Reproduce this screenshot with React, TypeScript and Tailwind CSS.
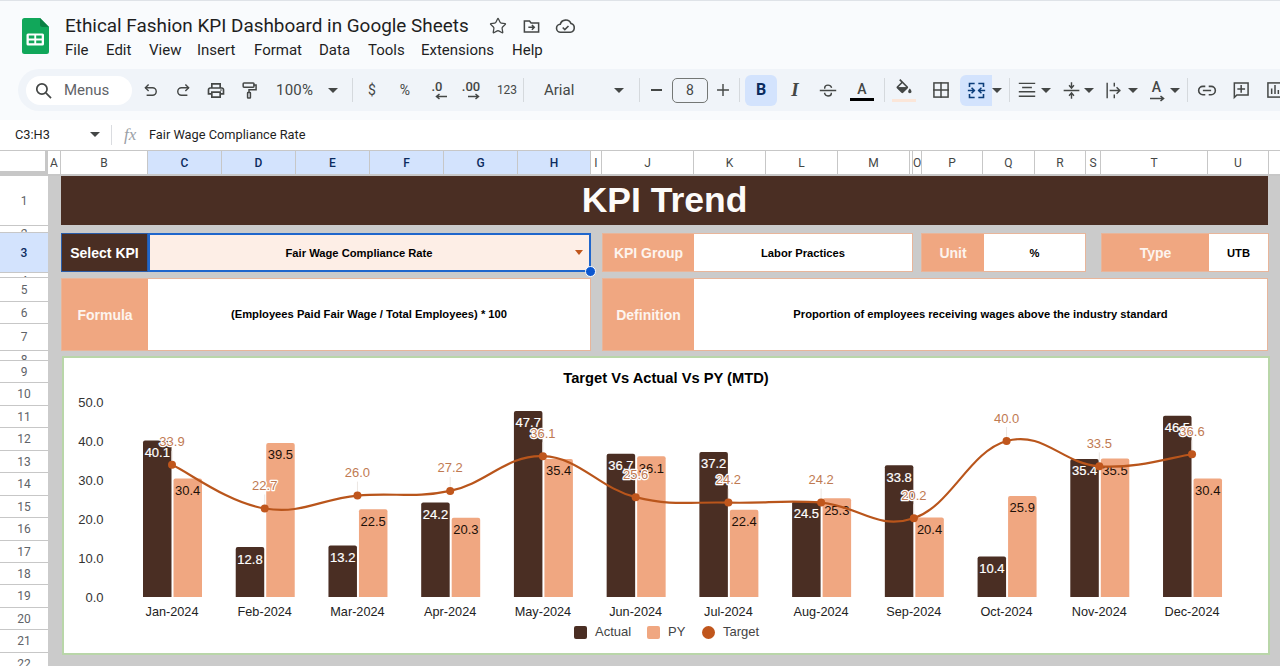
import React from "react";
import { Star } from "lucide-react";

const ic = "#444746";

function Svg({ children, size = 20, color = ic, sw = 1.8 }: { children: React.ReactNode; size?: number; color?: string; sw?: number }) {
  return (
    <svg width={size} height={size} viewBox="0 0 24 24" fill="none" stroke={color} strokeWidth={sw} strokeLinecap="square" strokeLinejoin="miter">
      {children}
    </svg>
  );
}

function Caret({ className = "" }: { className?: string }) {
  return (
    <div className={`flex w-[10px] shrink-0 items-center justify-center ${className}`}>
      <div className="h-0 w-0 border-x-[5px] border-t-[5px] border-x-transparent border-t-[#444746]" />
    </div>
  );
}

function Sep({ className = "" }: { className?: string }) {
  return <div className={`h-[24px] w-px shrink-0 bg-[#d5d9dd] ${className}`} />;
}

function Slot({ className = "", children }: { className?: string; children: React.ReactNode }) {
  return <div className={`flex h-[31px] w-[20px] shrink-0 items-center justify-center ${className}`}>{children}</div>;
}

function SheetsLogo() {
  return (
    <svg width="27" height="36" viewBox="0 0 27 36" className="shrink-0">
      <path d="M2.5 0H18l9 9v24.5a2.5 2.5 0 0 1-2.5 2.5h-22A2.5 2.5 0 0 1 0 33.5v-31A2.5 2.5 0 0 1 2.5 0z" fill="#11a75a" />
      <path d="M18 0l9 9h-6.5A2.5 2.5 0 0 1 18 6.5z" fill="#0b8043" />
      <rect x="4.5" y="15.5" width="17.5" height="12" rx="1.5" fill="#fff" />
      <path d="M6.8 17.6h5.5v2.9H6.8zM14.2 17.6h5.5v2.9h-5.5zM6.8 22.4h5.5v2.9H6.8zM14.2 22.4h5.5v2.9h-5.5z" fill="#11a75a" />
    </svg>
  );
}

function Toolbar() {
  return (
    <div className="ml-[18px] flex h-[42px] items-center overflow-hidden rounded-l-[21px] bg-[#f0f4f9] text-[#444746]">
      <div className="ml-[8px] flex h-[29px] w-[106px] shrink-0 items-center rounded-full bg-white">
        <svg width="19" height="19" viewBox="0 0 24 24" fill="none" stroke={ic} strokeWidth="2.2" className="ml-[8px]">
          <circle cx="10" cy="10" r="6.5" />
          <path d="M15 15l6.5 6.5" />
        </svg>
        <span className="ml-[11px] text-[15px] text-[#5f6368]">Menus</span>
      </div>
      <Slot className="ml-[8px]">
        <Svg size={19}><path d="M9 5L5.5 8.5 9 12" /><path d="M6 8.5h8.5a4.7 4.7 0 0 1 0 9.5H8" /></Svg>
      </Slot>
      <Slot className="ml-[13px]">
        <Svg size={19}><path d="M15 5l3.5 3.5L15 12" /><path d="M18 8.5H9.5a4.7 4.7 0 0 0 0 9.5H16" /></Svg>
      </Slot>
      <Slot className="ml-[13px]">
        <svg width="21" height="21" viewBox="0 0 24 24" fill={ic}>
          <path d="M19 8h-1V3H6v5H5c-1.66 0-3 1.34-3 3v6h4v4h12v-4h4v-6c0-1.66-1.34-3-3-3zM8 5h8v3H8V5zm8 14H8v-4h8v4zm2-4v-2H6v2H4v-4c0-.55.45-1 1-1h14c.55 0 1 .45 1 1v4h-2z" />
          <circle cx="18" cy="11.5" r="1" />
        </svg>
      </Slot>
      <Slot className="ml-[13px]">
        <Svg size={21}>
          <rect x="5" y="3" width="13" height="5" rx="1" />
          <path d="M18 5.5h2.5v5.5H12v3" />
          <rect x="10.3" y="14.5" width="3.4" height="6.5" rx="0.6" />
        </Svg>
      </Slot>
      <span className="ml-[17px] w-[40px] shrink-0 text-[15px] tracking-[0.2px]">100%</span>
      <Caret className="ml-[12px]" />
      <Sep className="ml-[14px]" />
      <span className="ml-[15px] w-[8px] shrink-0 text-center text-[14px]">$</span>
      <span className="ml-[22px] w-[14px] shrink-0 text-center text-[14px]">%</span>
      <div className="ml-[16px] flex w-[18px] shrink-0 flex-col items-center leading-none">
        <span className="text-[13px] font-medium leading-[13px]">.0</span>
        <svg width="14" height="7" viewBox="0 0 14 7" className="ml-[8px]" fill="none" stroke={ic} strokeWidth="1.5"><path d="M13 3.5H3M5.5 1L2.5 3.5 5.5 6" /></svg>
      </div>
      <div className="ml-[15px] flex w-[20px] shrink-0 flex-col items-center leading-none">
        <span className="text-[13px] font-medium leading-[13px]">.00</span>
        <svg width="14" height="7" viewBox="0 0 14 7" className="ml-[6px]" fill="none" stroke={ic} strokeWidth="1.5"><path d="M1 3.5h10M8.5 1l3 2.5-3 2.5" /></svg>
      </div>
      <span className="ml-[15px] w-[22px] shrink-0 text-center text-[12px]">123</span>
      <Sep className="ml-[5px]" />
      <span className="ml-[20px] w-[67px] shrink-0 text-[15px]">Arial</span>
      <Caret className="ml-[3px]" />
      <Sep className="ml-[15px]" />
      <div className="ml-[10.5px] h-[2px] w-[11px] shrink-0 bg-[#444746]" />
      <div className="ml-[10.5px] flex h-[25px] w-[36px] shrink-0 items-center justify-center rounded-[5px] border border-[#747775] text-[14px]">8</div>
      <div className="ml-[6px] shrink-0"><Svg size={18} sw={1.9}><path d="M12 5v14M5 12h14" /></Svg></div>
      <Sep className="ml-[7px]" />
      <div className="ml-[5px] flex h-[31px] w-[32px] shrink-0 items-center justify-center rounded-[6px] bg-[#d3e3fd] text-[16px] font-bold text-[#0b2b5e]">B</div>
      <span className="ml-[8px] w-[20px] shrink-0 text-center font-['Liberation_Serif'] text-[19px] font-bold italic">I</span>
      <Slot className="ml-[13px]">
        <Svg size={21} sw={1.7}>
          <path d="M3 12h18" />
          <path d="M8 9c0-2.4 1.8-3.5 4-3.5s3.6.9 4 2.5" />
          <path d="M8 15.5c.4 1.8 2 3 4 3 2.2 0 4-1 4-3" />
        </Svg>
      </Slot>
      <div className="ml-[12px] flex w-[24px] shrink-0 flex-col items-center">
        <span className="h-[18px] text-[14px] font-medium leading-[18px]">A</span>
        <div className="h-[3px] w-[24px] bg-black" />
      </div>
      <Sep className="ml-[10px]" />
      <div className="ml-[9px] flex w-[20px] shrink-0 flex-col items-center">
        <svg width="20" height="20" viewBox="0 0 24 24" fill={ic}>
          <path d="M16.56 8.94L7.62 0 6.21 1.41l2.38 2.38-5.15 5.15c-.59.59-.59 1.54 0 2.12l5.5 5.5c.29.29.68.44 1.06.44s.77-.15 1.06-.44l5.5-5.5c.59-.58.59-1.53 0-2.12zM5.21 10L10 5.21 14.79 10H5.21z" />
          <path d="M4.5 10h11L10 15.8zM19 11.5s-2 2.17-2 3.5c0 1.1.9 2 2 2s2-.9 2-2c0-1.33-2-3.5-2-3.5z" />
        </svg>
        <div className="h-[3px] w-[24px] shrink-0 bg-[#fbe6d9]" />
      </div>
      <Slot className="ml-[17px]">
        <Svg size={20} sw={1.8}><rect x="3.5" y="3.5" width="17" height="17" /><path d="M12 3.5v17M3.5 12h17" /></Svg>
      </Slot>
      <div className="ml-[9px] flex h-[31px] w-[32px] shrink-0 items-center justify-center rounded-l-[6px] bg-[#d3e3fd]">
        <Svg size={21} color="#0b3d7a" sw={1.8}>
          <path d="M9 4H4v3M4 17v3h5M15 4h5v3M20 17v3h-5" />
          <path d="M3 12h6.5M7 9.5L9.5 12 7 14.5M21 12h-6.5M17 9.5L14.5 12l2.5 2.5" />
        </Svg>
      </div>
      <Caret />
      <Sep className="ml-[7px]" />
      <Slot className="ml-[7px]">
        <Svg size={20} sw={1.7}><path d="M3 4h18M7 9h10M3 14h18M3 19.5h18" /></Svg>
      </Slot>
      <Caret className="ml-[4px]" />
      <Slot className="ml-[10px]">
        <Svg size={19} sw={1.8}><path d="M3 12h18M12 2.5v6M9.5 6l2.5 3 2.5-3M12 21.5v-6M9.5 18l2.5-3 2.5 3" /></Svg>
      </Slot>
      <Caret className="ml-[3px]" />
      <Slot className="ml-[9px]">
        <Svg size={19} sw={1.8}><path d="M4 3v18M8 12h12M16.5 8.5L20 12l-3.5 3.5" /><path d="M13 3v3M13 18v3" /></Svg>
      </Slot>
      <Caret className="ml-[5px]" />
      <div className="ml-[8.5px] flex w-[20px] shrink-0 flex-col items-center">
        <span className="h-[16px] text-[14px] font-medium leading-[16px]">A</span>
        <svg width="20" height="7" viewBox="0 0 20 7" fill="none" stroke={ic} strokeWidth="1.6"><path d="M3 3.5h13M13.5 1l3 2.5-3 2.5" /></svg>
      </div>
      <Caret className="ml-[3.5px]" />
      <Sep className="ml-[7px]" />
      <Slot className="ml-[9px]">
        <Svg size={21} sw={1.9}><path d="M9 17H7A5 5 0 0 1 7 7h2" /><path d="M15 7h2a5 5 0 1 1 0 10h-2" /><path d="M8 12h8" /></Svg>
      </Slot>
      <Slot className="ml-[14px]">
        <Svg size={22} sw={1.8}><path d="M4 3.5h16.5V18H7l-3 3z" /><path d="M12.2 7v7.5M8.5 10.8H16" /></Svg>
      </Slot>
      <Slot className="ml-[14px]">
        <Svg size={20} sw={1.8}><rect x="3.5" y="3.5" width="17" height="17" /><path d="M8 16v-5M12 16V7M16 16v-3" /></Svg>
      </Slot>
    </div>
  );
}

function Header() {
  return (
    <div className="h-[120px] border-t border-[#dfe3e8] bg-[#f9fbfd]">
      <div className="flex h-[68px]">
        <div className="ml-[22px] mt-[17px]"><SheetsLogo /></div>
        <div className="ml-[16px] flex flex-col">
          <div className="mt-[13px] flex h-[24px] items-center">
            <span className="w-[405px] whitespace-nowrap text-[18.9px] leading-[24px] text-[#1f1f1f]">Ethical Fashion KPI Dashboard in Google Sheets</span>
            <Star size={18} strokeWidth={1.7} color={ic} className="ml-[19px]" />
            <svg width="19" height="19" viewBox="0 0 24 24" fill="none" stroke={ic} strokeWidth="1.9" className="ml-[15px]">
              <path d="M3 5h6.5l2 2.5H21V19H3z" />
              <path d="M8 13h7M12.5 10l3 3-3 3" />
            </svg>
            <svg width="21" height="21" viewBox="0 0 24 24" fill="none" stroke={ic} strokeWidth="1.8" className="ml-[14px]">
              <path d="M6.5 18.5A4.5 4.5 0 0 1 6 9.5a6.5 6.5 0 0 1 12.3-.8A5 5 0 0 1 17.5 18.5z" />
              <path d="M8.8 13.2l2.4 2.4 4.2-4.2" />
            </svg>
          </div>
          <div className="mt-[2px] flex h-[20px] items-center text-[15px] leading-[20px] text-[#1f1f1f]">
            <span className="w-[41px]">File</span>
            <span className="w-[43px]">Edit</span>
            <span className="w-[48px]">View</span>
            <span className="w-[57px]">Insert</span>
            <span className="w-[65px]">Format</span>
            <span className="w-[49px]">Data</span>
            <span className="w-[53px]">Tools</span>
            <span className="w-[91px]">Extensions</span>
            <span>Help</span>
          </div>
        </div>
      </div>
      <Toolbar />
    </div>
  );
}

function FormulaBar() {
  return (
    <div className="flex h-[30px] items-center bg-white pb-[1px] text-[12.8px] text-[#1f1f1f]">
      <span className="ml-[15px] w-[75px]">C3:H3</span>
      <Caret />
      <div className="ml-[11px] h-[20px] w-px bg-[#dadce0]" />
      <span className="ml-[12px] w-[25px] font-['Liberation_Serif'] text-[17px] italic text-[#9aa0a6]">fx</span>
      <span>Fair Wage Compliance Rate</span>
    </div>
  );
}

const cols: [string, string, boolean][] = [
  ["A", "w-[13px]", false],
  ["B", "w-[87px]", false],
  ["C", "w-[74px]", true],
  ["D", "w-[74px]", true],
  ["E", "w-[74px]", true],
  ["F", "w-[74px]", true],
  ["G", "w-[74px]", true],
  ["H", "w-[73px]", true],
  ["I", "w-[11px]", false],
  ["J", "w-[92px]", false],
  ["K", "w-[72px]", false],
  ["L", "w-[72px]", false],
  ["M", "w-[72px]", false],
  ["", "w-[3px]", false],
  ["O", "w-[9px]", false],
  ["P", "w-[61px]", false],
  ["Q", "w-[52px]", false],
  ["R", "w-[51px]", false],
  ["S", "w-[15px]", false],
  ["T", "w-[107px]", false],
  ["U", "w-[61px]", false],
];

function ColumnHeader() {
  return (
    <div className="flex h-[26px] border-t border-[#c7c7c7] bg-white text-[12px] text-[#444746]">
      <div className="h-full w-[48px] shrink-0 border-b-[5px] border-r-[3px] border-[#c7c7c7]" />
      {cols.map(([name, w, active], i) => (
        <div
          key={i}
          className={`flex h-full shrink-0 items-center justify-center overflow-hidden border-b-2 border-r border-[#c7c7c7] ${w} ${active ? "bg-[#d3e3fd] font-medium text-[#0b2b5e]" : ""}`}
        >
          {name}
        </div>
      ))}
      <div className="h-full flex-1 border-b-2 border-[#c7c7c7]" />
    </div>
  );
}

const rows: [string, string, string][] = [
  ["1", "h-[50px]", "items-center"],
  ["2", "h-[7px]", "items-start pt-[2px]"],
  ["3", "h-[40px]", "items-center bg-[#d3e3fd] text-[#0b2b5e] font-medium"],
  ["4", "h-[5px]", "items-start pt-[2px]"],
  ["5", "h-[24px]", "items-center pt-[1px]"],
  ["6", "h-[22px]", "items-center pt-[1px]"],
  ["7", "h-[27px]", "items-center"],
  ["8", "h-[10px]", "items-start pt-[3px]"],
  ["9", "h-[22px]", "items-center"],
  ["10", "h-[23px]", "items-center"],
  ["11", "h-[22px]", "items-center"],
  ["12", "h-[23px]", "items-center"],
  ["13", "h-[22px]", "items-center"],
  ["14", "h-[23px]", "items-center"],
  ["15", "h-[22px]", "items-center"],
  ["16", "h-[23px]", "items-center"],
  ["17", "h-[22px]", "items-center"],
  ["18", "h-[22px]", "items-center"],
  ["19", "h-[23px]", "items-center"],
  ["20", "h-[22px]", "items-center"],
  ["21", "h-[23px]", "items-center"],
  ["22", "h-[22px]", "items-start pt-[5px]"],
];

function RowHeader() {
  return (
    <div className="w-[48px] shrink-0 overflow-hidden bg-white text-[12px] text-[#5f6368]">
      {rows.map(([n, h, extra]) => (
        <div key={n} className={`flex justify-center overflow-hidden border-b border-[#c7c7c7] leading-[12px] ${h} ${extra}`}>
          {n}
        </div>
      ))}
    </div>
  );
}

const actual = [40.1, 12.8, 13.2, 24.2, 47.7, 36.7, 37.2, 24.5, 33.8, 10.4, 35.4, 46.5];
const py = [30.4, 39.5, 22.5, 20.3, 35.4, 36.1, 22.4, 25.3, 20.4, 25.9, 35.5, 30.4];
const target = [33.9, 22.7, 26.0, 27.2, 36.1, 25.6, 24.2, 24.2, 20.2, 40.0, 33.5, 36.6];
const months = ["Jan-2024", "Feb-2024", "Mar-2024", "Apr-2024", "May-2024", "Jun-2024", "Jul-2024", "Aug-2024", "Sep-2024", "Oct-2024", "Nov-2024", "Dec-2024"];

const cx = (i: number) => 172 + 92.73 * i;
const vy = (v: number) => 597 - v * 3.9;
const barPath = (x: number, w: number, v: number) => {
  const t = vy(v);
  return `M${x} 597V${t + 2}Q${x} ${t} ${x + 2} ${t}H${x + w - 2}Q${x + w} ${t} ${x + w} ${t + 2}V597Z`;
};

function curve() {
  const p = target.map((v, i) => [cx(i), vy(v)]);
  let d = `M${p[0][0]} ${p[0][1]}`;
  for (let i = 0; i < p.length - 1; i++) {
    const a = p[Math.max(0, i - 1)];
    const b = p[i];
    const c = p[i + 1];
    const e = p[Math.min(p.length - 1, i + 2)];
    const k = 1 / 5;
    d += `C${b[0] + (c[0] - a[0]) * k} ${b[1] + (c[1] - a[1]) * k} ${c[0] - (e[0] - b[0]) * k} ${c[1] - (e[1] - b[1]) * k} ${c[0]} ${c[1]}`;
  }
  return d;
}

function Chart() {
  return (
    <div className="ml-[1px] flex h-[299px] w-[1208px] flex-col border-2 border-[#b9d6a9] bg-white">
      <div className="mt-[5px] h-[30px] text-center text-[14.7px] font-bold leading-[30px] text-black">Target Vs Actual Vs PY (MTD)</div>
      <svg width="1204" height="227" viewBox="64 393 1204 227" className="block shrink-0 overflow-visible">
        {[0, 10, 20, 30, 40, 50].map((v) => (
          <text key={v} x="103.5" y={vy(v) + 4.5} textAnchor="end" className="fill-[#333] text-[13px]">{v.toFixed(1)}</text>
        ))}
        {months.map((m, i) => (
          <g key={m}>
            <path d={barPath(cx(i) - 29, 28.5, actual[i])} fill="#4a2e23" />
            <path d={barPath(cx(i) + 1.5, 28.5, py[i])} fill="#f0a781" />
            <text x={cx(i)} y="616" textAnchor="middle" className="fill-[#222] text-[12.7px]">{m}</text>
            <text x={cx(i) - 14.7} y={vy(actual[i]) + 16.5} textAnchor="middle" stroke="#fff" strokeWidth="0.2" className="fill-white text-[13px]">{actual[i].toFixed(1)}</text>
            <text x={cx(i) + 15.7} y={vy(py[i]) + 16.5} textAnchor="middle" className="fill-[#1c1008] text-[13px]">{py[i].toFixed(1)}</text>
          </g>
        ))}
        {target.map((v, i) => (
          <path key={i} d={`M${cx(i)} ${vy(v) - 14}V${vy(v)}`} stroke="#ece6e2" strokeWidth="1" />
        ))}
        <path d={curve()} fill="none" stroke="#b9551b" strokeWidth="2.2" />
        {target.map((v, i) => (
          <circle key={i} cx={cx(i)} cy={vy(v)} r="4" fill="#c0561c" />
        ))}
        {target.map((v, i) => (
          <text
            key={i}
            x={cx(i)}
            y={vy(v) - 18.5}
            textAnchor="middle"
            stroke="#fff"
            strokeWidth="2.5"
            strokeLinejoin="round"
            paintOrder="stroke"
            className="fill-[#bf7a52] text-[13px]"
          >
            {v.toFixed(1)}
          </text>
        ))}
      </svg>
      <div className="flex h-[24px] items-center text-[13px] text-[#444]">
        <div className="ml-[510px] h-[13px] w-[13px] rounded-[2px] bg-[#4a2e23]" />
        <span className="ml-[8px] w-[36px]">Actual</span>
        <div className="ml-[16px] h-[13px] w-[13px] rounded-[2px] bg-[#f0a781]" />
        <span className="ml-[8px] w-[17px]">PY</span>
        <div className="ml-[17px] h-[13px] w-[13px] rounded-full bg-[#c0561c]" />
        <span className="ml-[8px]">Target</span>
      </div>
    </div>
  );
}

function Field({ label, value, labelW, className = "", valueText = "" }: { label: string; value: string; labelW: string; className?: string; valueText?: string }) {
  return (
    <div className={`flex h-full shrink-0 border border-[#e8b59a] ${className}`}>
      <div className={`flex shrink-0 items-center justify-center bg-[#f0a781] pt-[1px] text-[14px] font-bold text-[#fdf4ee] ${labelW}`}>{label}</div>
      <div className={`flex flex-1 items-center justify-center bg-white text-[11.2px] font-bold text-black ${valueText}`}>{value}</div>
    </div>
  );
}

function Sheet() {
  return (
    <div className="relative flex-1 overflow-hidden bg-[#cbcbcb] pl-[13px] font-['Liberation_Sans']">
      <div className="flex h-[49px] w-[1207px] items-center justify-center bg-[#4a2e23] text-[35.5px] font-bold text-[#fdfbf9]">KPI Trend</div>
      <div className="mt-[8px] flex h-[39px]">
        <div className="relative flex w-[530px] shrink-0">
          <div className="flex w-[87px] items-center justify-center border border-[#2a5ca8] bg-[#4a2e23] pt-[1px] text-[14px] font-bold text-white">Select KPI</div>
          <div className="relative flex flex-1 items-center justify-center border-2 border-[#1f66cc] bg-[#fdeee6] pr-[21px] pt-[1px] text-[11.2px] font-bold text-black">
            Fair Wage Compliance Rate
            <div className="absolute right-[6px] top-[15px] h-0 w-0 border-x-[4.5px] border-t-[5px] border-x-transparent border-t-[#c0561c]" />
          </div>
          <div className="absolute bottom-[-5px] right-[-5px] h-[11px] w-[11px] rounded-full border border-white bg-[#0b57d0]" />
        </div>
        <Field label="KPI Group" value="Labor Practices" labelW="w-[91px]" className="ml-[11px] w-[311px]" valueText="pt-[1px]" />
        <Field label="Unit" value="%" labelW="w-[62px]" className="ml-[8px] w-[165px]" valueText="pt-[1px]" />
        <Field label="Type" value="UTB" labelW="w-[107px]" className="ml-[15px] w-[168px]" valueText="pt-[1px]" />
      </div>
      <div className="mt-[6px] flex h-[73px]">
        <Field label="Formula" value="(Employees Paid Fair Wage / Total Employees) * 100" labelW="w-[86px]" className="w-[530px]" />
        <Field label="Definition" value="Proportion of employees receiving wages above the industry standard" labelW="w-[91px]" className="ml-[11px] w-[666px]" />
      </div>
      <div className="mt-[5px]">
        <Chart />
      </div>
    </div>
  );
}

export default function App() {
  return (
    <div className="flex h-[666px] w-[1280px] flex-col overflow-hidden bg-white font-['Roboto',sans-serif]">
      <Header />
      <FormulaBar />
      <ColumnHeader />
      <div className="flex min-h-0 flex-1 overflow-hidden">
        <RowHeader />
        <Sheet />
      </div>
    </div>
  );
}
